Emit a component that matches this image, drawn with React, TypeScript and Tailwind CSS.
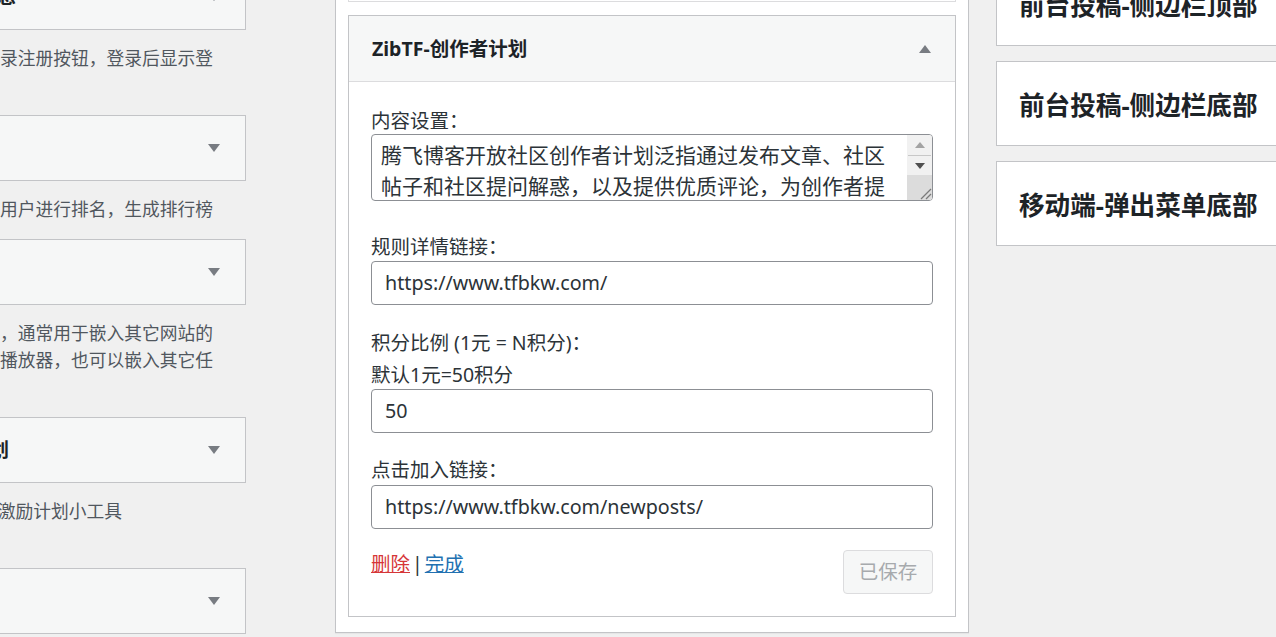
import React from "react";

type LeftItem = {
  title: string;
  titleW: number;
  lines: { t: string; w: number }[];
};

const leftItems: LeftItem[] = [
  { title: "用户信息", titleW: 35, lines: [{ t: "在侧边栏显示登录注册按钮，登录后显示登", w: 233 }, { t: "录用户信息", w: 0 }] },
  { title: "用户排行榜", titleW: 0, lines: [{ t: "按照积分、余额等数据对用户进行排名，生成排行榜", w: 233 }] },
  {
    title: "自定义HTML代码",
    titleW: 0,
    lines: [
      { t: "可插入任意的HTML代码，通常用于嵌入其它网站的", w: 233 },
      { t: "视频、音乐播放器，也可以嵌入其它任", w: 233 },
      { t: "意内容", w: 0 },
    ],
  },
  { title: "ZibTF-创作者激励计划", titleW: 28, lines: [{ t: "显示创作者激励计划小工具", w: 142 }, { t: "", w: 0 }] },
  { title: "ZibTF-积分商城", titleW: 0, lines: [] },
];

function DownTri() {
  return (
    <svg width="12" height="8" viewBox="0 0 12 8" className="shrink-0">
      <polygon points="0,0 12,0 6,8" fill="#787c82" />
    </svg>
  );
}

function LeftColumn() {
  return (
    <div className="-ml-[20px] w-[266px] shrink-0 flex flex-col">
      {leftItems.map((it, i) => (
        <div key={i} className={i === 0 ? "-mt-[36px]" : ""}>
          <div className="h-[66px] border border-[#c3c4c7] bg-[#f6f7f7] flex items-center pr-[25px]">
            <div
              className="flex justify-end whitespace-nowrap text-[19.5px] font-bold text-[#1d2327] leading-[26px]"
              style={{ width: it.titleW }}
            >
              {it.titleW > 0 ? it.title : ""}
            </div>
            <div className="ml-auto">
              <DownTri />
            </div>
          </div>
          {it.lines.length > 0 && (
            <div className="mt-[15px] mb-[16px]">
              {it.lines.map((l, j) => (
                <div
                  key={j}
                  className="h-[27px] leading-[27px] flex justify-end whitespace-nowrap text-[17.75px] text-[#50575e] overflow-visible"
                  style={{ width: l.w }}
                >
                  {l.w > 0 ? l.t : ""}
                </div>
              ))}
            </div>
          )}
        </div>
      ))}
    </div>
  );
}

function Label({ children, className = "" }: { children: React.ReactNode; className?: string }) {
  return (
    <div className={"h-[26px] leading-[26px] text-[19.5px] text-[#2c3338] whitespace-nowrap " + className}>
      {children}
    </div>
  );
}

function Input({ value, className = "" }: { value: string; className?: string }) {
  return (
    <div
      className={
        "h-[44px] border border-[#8c8f94] rounded-[4px] bg-white flex items-center pl-[13px] text-[19.7px] text-[#2c3338] whitespace-nowrap overflow-hidden " +
        className
      }
    >
      {value}
    </div>
  );
}

function TextArea() {
  return (
    <div className="h-[67px] border border-[#8c8f94] rounded-[4px] bg-white overflow-hidden flex">
      <div className="flex-1 pl-[9px] pt-[5px] text-[21px] leading-[31px] text-[#2c3338] whitespace-nowrap overflow-hidden">
        <div>腾飞博客开放社区创作者计划泛指通过发布文章、社区</div>
        <div>帖子和社区提问解惑，以及提供优质评论，为创作者提</div>
      </div>
      <div className="w-[25px] shrink-0 flex flex-col bg-[#f1f1f1]">
        <div className="h-[21px] flex items-center justify-center border-b border-[#c8c8c8] mx-[1px]">
          <svg width="10" height="6" viewBox="0 0 10 6">
            <polygon points="0,6 10,6 5,0" fill="#a3a3a3" />
          </svg>
        </div>
        <div className="h-[19px] flex items-center justify-center">
          <svg width="10" height="6" viewBox="0 0 10 6">
            <polygon points="0,0 10,0 5,6" fill="#505050" />
          </svg>
        </div>
        <div className="flex-1 bg-[#dcdcdc] flex items-end justify-end">
          <svg width="14" height="14" viewBox="0 0 14 14">
            <line x1="3" y1="13" x2="13" y2="3" stroke="#7a7a7a" strokeWidth="1.2" />
            <line x1="8" y1="13" x2="13" y2="8" stroke="#7a7a7a" strokeWidth="1.2" />
          </svg>
        </div>
      </div>
    </div>
  );
}

function MiddleColumn() {
  return (
    <div className="ml-[89px] w-[634px] shrink-0 self-start -mt-[30px] border border-[#c3c4c7] bg-white px-[12px] pb-[15px] shadow-[0_1px_1px_rgba(0,0,0,0.04)]">
      <div className="h-[31px] border border-[#dcdcde] bg-white" />
      <div className="mt-[13px] border border-[#c3c4c7] bg-white">
        <div className="h-[66px] bg-[#f6f7f7] border-b border-[#dcdcde] flex items-center pl-[23px] pr-[24px]">
          <div className="text-[19.5px] font-bold text-[#1d2327] leading-[26px]">ZibTF-创作者计划</div>
          <svg width="12" height="8" viewBox="0 0 12 8" className="ml-auto">
            <polygon points="0,8 12,8 6,0" fill="#787c82" />
          </svg>
        </div>
        <div className="px-[22px] pt-[26px] pb-[22px]">
          <Label>内容设置：</Label>
          <TextArea />
          <Label className="mt-[33px]">规则详情链接：</Label>
          <Input className="mt-[1px]" value="https://www.tfbkw.com/" />
          <Label className="mt-[25px]">积分比例 (1元 = N积分)：</Label>
          <Label className="mt-[6px]">默认1元=50积分</Label>
          <Input className="mt-[1px]" value="50" />
          <Label className="mt-[24px]">点击加入链接：</Label>
          <Input className="mt-[2px]" value="https://www.tfbkw.com/newposts/" />
          <div className="mt-[21px] flex items-start">
            <div className="mt-[1px] h-[26px] leading-[26px] text-[19.5px] whitespace-nowrap flex">
              <span className="text-[#d63638] underline">删除</span>
              <span className="text-[#2c3338] mx-[2px]">|</span>
              <span className="text-[#2271b1] underline">完成</span>
            </div>
            <div className="ml-auto w-[90px] h-[44px] border border-[#dcdcde] bg-[#f6f7f7] rounded-[4px] flex items-center justify-center text-[19.5px] text-[#a7aaad]">
              已保存
            </div>
          </div>
        </div>
      </div>
    </div>
  );
}

const rightTitles = ["前台投稿-侧边栏顶部", "前台投稿-侧边栏底部", "移动端-弹出菜单底部"];

function RightColumn() {
  return (
    <div className="ml-[27px] w-[320px] shrink-0 flex flex-col">
      {rightTitles.map((t, i) => (
        <div
          key={i}
          className={
            "h-[85px] border border-[#c3c4c7] bg-white flex items-center pl-[22px] pt-[5px] " +
            (i === 0 ? "-mt-[39px]" : "mt-[15px]")
          }
        >
          <div className="text-[25.6px] font-bold text-[#1d2327] leading-[32px] whitespace-nowrap">{t}</div>
        </div>
      ))}
    </div>
  );
}

export default function App() {
  return (
    <div className="w-[1276px] h-[637px] overflow-hidden bg-[#f0f0f0] flex items-start font-['Noto_Sans','Noto_Sans_CJK_SC',sans-serif]">
      <LeftColumn />
      <MiddleColumn />
      <RightColumn />
    </div>
  );
}
